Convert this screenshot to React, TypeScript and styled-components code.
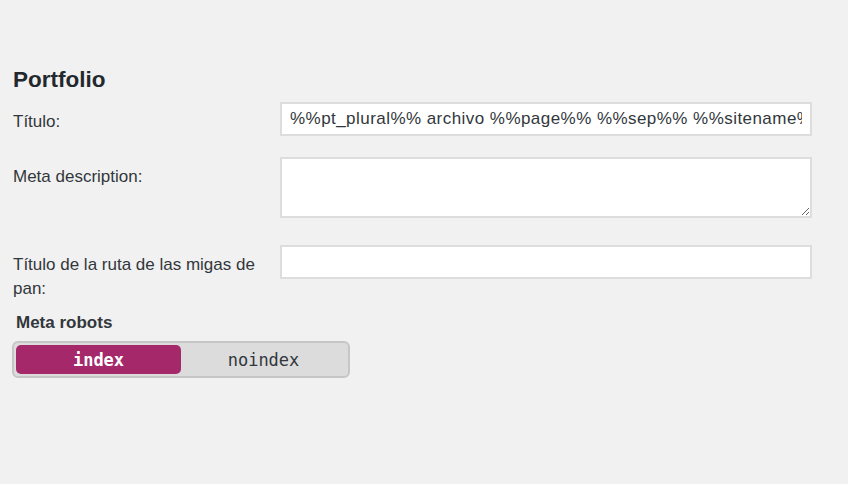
import React, { useState } from "react";
import styled, { createGlobalStyle } from "styled-components";

const GlobalStyle = createGlobalStyle`
  html, body {
    margin: 0;
    padding: 0;
    background: #f1f1f1;
  }
  body {
    font-family: "Liberation Sans", Arial, sans-serif;
    color: #32373c;
  }
`;

const Page = styled.div`
  width: 848px;
  min-height: 484px;
  box-sizing: border-box;
  padding: 66px 0 0 13px;
`;

const Heading = styled.h3`
  margin: 0 0 9px;
  font-size: 22.5px;
  line-height: 27px;
  font-weight: 700;
  color: #23282d;
`;

const FieldRow = styled.div<{ $gap: number }>`
  display: grid;
  grid-template-columns: 267px 532px;
  align-items: start;
  margin-bottom: ${(p) => p.$gap}px;
`;

const Label = styled.label`
  display: block;
  padding: 8px 12px 0 0;
  font-size: 17px;
  line-height: 24px;
  color: #32373c;
`;

const TextInput = styled.input`
  box-sizing: border-box;
  width: 532px;
  height: 34px;
  margin: 0;
  padding: 0 8px;
  border: 2px solid #dddddd;
  background: #ffffff;
  font-family: "Liberation Sans", Arial, sans-serif;
  font-size: 17px;
  letter-spacing: 0.45px;
  color: #32373c;
  outline: none;
`;

const TextArea = styled.textarea`
  display: block;
  box-sizing: border-box;
  width: 532px;
  height: 61px;
  margin: 0;
  padding: 6px 8px;
  border: 2px solid #dddddd;
  background: #ffffff;
  font-family: "Liberation Sans", Arial, sans-serif;
  font-size: 17px;
  color: #32373c;
  outline: none;
`;

const SectionLabel = styled.div`
  margin: 10px 0 6px 3px;
  font-size: 17px;
  line-height: 24px;
  font-weight: 700;
  color: #32373c;
`;

const Toggle = styled.div`
  display: grid;
  grid-template-columns: 1fr 1fr;
  box-sizing: border-box;
  width: 338px;
  height: 37px;
  padding: 2px;
  border: 2px solid #c6c6c6;
  border-radius: 6px;
  background: #dcdcdc;
  margin-left: -1px;
`;

const ToggleOption = styled.button<{ $active: boolean }>`
  display: flex;
  align-items: center;
  justify-content: center;
  margin: 0;
  padding: 0;
  border: none;
  border-radius: 5px;
  cursor: pointer;
  font-family: "DejaVu Sans Mono", "Liberation Mono", monospace;
  font-size: 17px;
  font-weight: ${(p) => (p.$active ? 700 : 400)};
  color: ${(p) => (p.$active ? "#ffffff" : "#32373c")};
  background: ${(p) => (p.$active ? "#a4286a" : "transparent")};
`;

export default function App() {
  const [robots, setRobots] = useState<"index" | "noindex">("index");
  return (
    <>
      <GlobalStyle />
      <Page>
        <Heading>Portfolio</Heading>
        <FieldRow $gap={21}>
          <Label htmlFor="title">Título:</Label>
          <TextInput
            id="title"
            type="text"
            defaultValue="%%pt_plural%% archivo %%page%% %%sep%% %%sitename%%"
          />
        </FieldRow>
        <FieldRow $gap={27}>
          <Label htmlFor="metadesc">Meta description:</Label>
          <TextArea id="metadesc" />
        </FieldRow>
        <FieldRow $gap={0}>
          <Label htmlFor="bctitle">Título de la ruta de las migas de pan:</Label>
          <TextInput id="bctitle" type="text" defaultValue="" />
        </FieldRow>
        <SectionLabel>Meta robots</SectionLabel>
        <Toggle>
          <ToggleOption $active={robots === "index"} onClick={() => setRobots("index")}>
            index
          </ToggleOption>
          <ToggleOption $active={robots === "noindex"} onClick={() => setRobots("noindex")}>
            noindex
          </ToggleOption>
        </Toggle>
      </Page>
    </>
  );
}
